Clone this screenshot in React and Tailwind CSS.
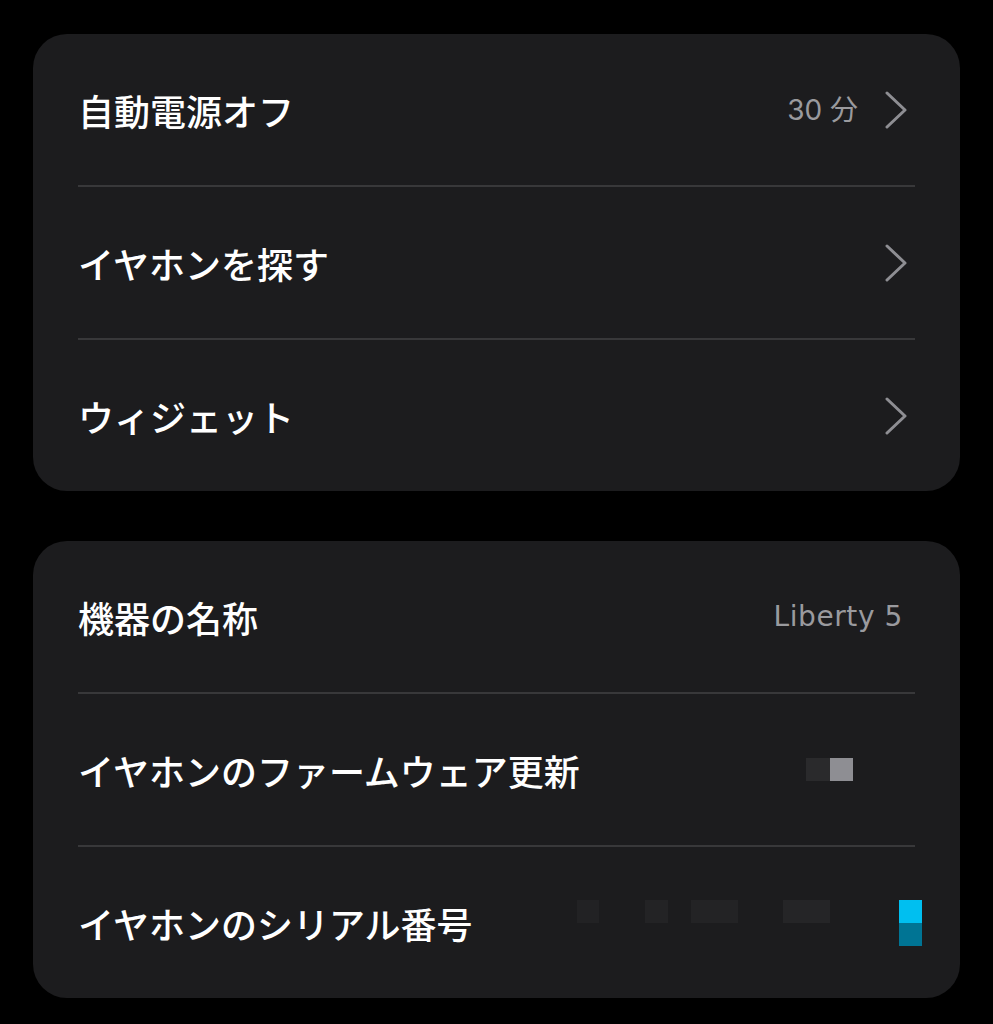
import React from 'react';

const jp = { fontFamily: '"Noto Sans CJK JP", "Noto Sans", sans-serif' };

const Chevron = () => (
  <svg width="24" height="38" viewBox="0 0 24 38" fill="none" stroke="#8e8e93" strokeWidth={3} strokeLinecap="round" strokeLinejoin="round">
    <path d="M3 2 L21 19 L3 36" />
  </svg>
);

const Row = ({ label, value, chevron, extra, last, latin }) => (
  <>
    <div className={`flex items-center justify-between h-[151px] pl-[45px] ${chevron ? 'pr-[52px]' : 'pr-[57px]'}`}>
      <span className="text-[36px] font-medium text-white leading-none" style={jp}>
        {label}
      </span>
      <div className="flex items-center gap-[26px]">
        {value && (
          <span
            className={`${latin ? 'text-[28px] tracking-[0.6px]' : 'text-[28px]'} text-[#9a9a9e] leading-none`}
            style={{ fontFamily: latin ? '"DejaVu Sans", sans-serif' : 'Inter, "Noto Sans CJK JP", sans-serif' }}
          >
            {value}
          </span>
        )}
        {extra}
        {chevron && <Chevron />}
      </div>
    </div>
    {!last && <div className="mx-[45px] h-[2px] bg-[#38383a]" />}
  </>
);

const Card = ({ children }) => (
  <div className="w-[927px] rounded-[34px] bg-[#1c1c1e] overflow-hidden">{children}</div>
);

export default function App() {
  return (
    <div className="min-h-[1024px] bg-black pt-[34px] pl-[33px] flex flex-col gap-[50px]">
      <Card>
        <Row label="自動電源オフ" value="30 分" chevron />
        <Row label="イヤホンを探す" chevron />
        <Row label="ウィジェット" chevron last />
      </Card>
      <Card>
        <Row label="機器の名称" value="Liberty 5" latin />
        <Row
          label="イヤホンのファームウェア更新"
          extra={
            <div className="flex mr-[50px]">
              <div className="w-[24px] h-[23px] bg-[#2a2a2c]" />
              <div className="w-[23px] h-[23px] bg-[#8e8e93]" />
            </div>
          }
        />
        <Row
          label="イヤホンのシリアル番号"
          last
          extra={
            <div className="flex items-start -mr-[19px]">
              <div className="w-[22px] h-[23px] bg-[#222224] mr-[46px]" />
              <div className="w-[23px] h-[23px] bg-[#232325] mr-[23px]" />
              <div className="w-[47px] h-[23px] bg-[#232325] mr-[45px]" />
              <div className="w-[47px] h-[23px] bg-[#252527] mr-[69px]" />
              <div className="flex flex-col">
                <div className="w-[23px] h-[23px] bg-[#00bff0]" />
                <div className="w-[23px] h-[23px] bg-[#007494]" />
              </div>
            </div>
          }
        />
      </Card>
    </div>
  );
}
